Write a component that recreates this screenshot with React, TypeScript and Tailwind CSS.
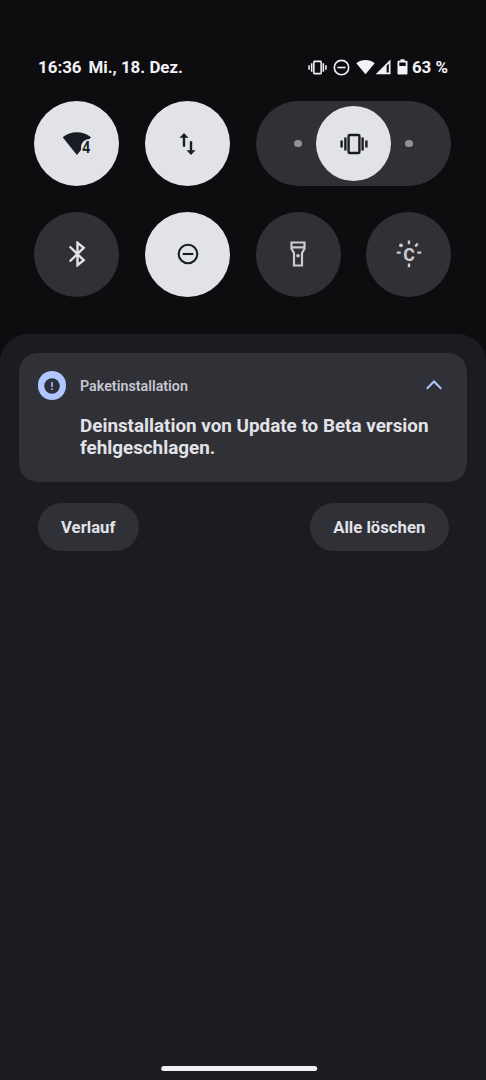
import type { ReactNode } from 'react';
import clsx from 'clsx';

function VibrateIcon({ className, strokeWidth = 2.4 }: { className?: string; strokeWidth?: number }) {
    return (
        <svg viewBox="0 0 28 22" className={className} fill="none" stroke="currentColor" strokeWidth={strokeWidth}>
            <rect x="8.6" y="2" width="10.8" height="18" rx="1" />
            <path d="M5.4 4.6v12.8M1.6 7.6v6.8M22.6 4.6v12.8M26.4 7.6v6.8" />
        </svg>
    );
}

function DndIcon({ className }: { className?: string }) {
    return (
        <svg viewBox="0 0 22 22" className={className} fill="none" stroke="currentColor" strokeWidth="2.1">
            <circle cx="11" cy="11" r="9.3" />
            <path d="M5.7 11h10.6" />
        </svg>
    );
}

function StatusBar() {
    return (
        <div className="flex h-5 items-center pl-[38px] pr-[38px] text-[16.9px] font-bold leading-5 text-[#f3f1f8]">
            <span className="w-[50.4px]">16:36</span>
            <span>Mi., 18. Dez.</span>
            <div className="ml-auto flex items-center">
                <VibrateIcon className="mr-1.5 h-[15px] w-[19px]" strokeWidth={2.3} />
                <DndIcon className="mr-1.5 size-[17px]" />
                <svg width="19" height="16" viewBox="0 0 19 16" fill="currentColor">
                    <path d="M.3 4.2C5.6-.2 13.4-.2 18.7 4.2L9.5 15.2z" />
                </svg>
                <svg width="16" height="16" viewBox="0 0 16 16" className="mr-[6.5px]" fill="currentColor">
                    <path d="M15.5.4v14.8H.7zM13.8 4.4l-2.2 2.4v6.8h2.2z" fillRule="evenodd" />
                </svg>
                <svg width="11" height="16" viewBox="0 0 11 16" className="mr-[3.5px]" fill="currentColor">
                    <path d="M3.5.2h4v1.6h2a1 1 0 0 1 1 1v11.7a1 1 0 0 1-1 1h-8a1 1 0 0 1-1-1V2.8a1 1 0 0 1 1-1h2zM2.3 3.5v3.6h6.4V3.5z" fillRule="evenodd" />
                </svg>
                <span>63 %</span>
            </div>
        </div>
    );
}

function Tile({ active = false, children }: { active?: boolean; children: ReactNode }) {
    return (
        <button
            className={clsx(
                'flex size-[85px] items-center justify-center rounded-full',
                active ? 'bg-[#e2e2e9] text-[#191c22]' : 'bg-[#303136] text-[#cbccd3]'
            )}
        >
            {children}
        </button>
    );
}

function RingerSlider() {
    return (
        <div className="col-span-2 flex h-[85px] items-center justify-between rounded-full bg-[#303136] px-[38.6px]">
            <span className="size-[7.5px] rounded-full bg-[#919197]" />
            <button className="flex size-[75px] items-center justify-center rounded-full bg-[#e2e2e9] text-[#191c22]">
                <VibrateIcon className="h-[22px] w-7" />
            </button>
            <span className="size-[7.5px] rounded-full bg-[#919197]" />
        </div>
    );
}

function QuickSettings() {
    return (
        <div className="grid grid-cols-[repeat(4,85px)] gap-x-[25.7px] gap-y-[25.6px] pl-[34.4px]">
            {/* Wifi 4 */}
            <Tile active>
                <svg width="30" height="24" viewBox="0 0 30 24" fill="currentColor" className="overflow-visible">
                    <path d="M.7 5.2C9-1.3 20.7-1.3 29 5.2l-1.5 1.8c-5 0-8.5 3.6-8.5 9v2L14.9 23z" />
                    <text x="20" y="20.5" fontSize="16" fontWeight="600" textLength="8.4" lengthAdjust="spacingAndGlyphs">4</text>
                </svg>
            </Tile>
            {/* Mobile data */}
            <Tile active>
                <svg width="17" height="22" viewBox="0 0 17 22" fill="currentColor">
                    <path d="M5 0l4.5 4.7H6.2v9H3.8v-9H.5zM12 22l-4.5-4.7h3.3v-9h2.4v9h3.3z" />
                </svg>
            </Tile>
            <RingerSlider />
            {/* Bluetooth */}
            <Tile>
                <svg width="18" height="26" viewBox="0 0 18 26" fill="none" stroke="currentColor" strokeWidth="2.4" className="text-[#e2e2e9]">
                    <path d="M1.7 5.5l14 13.7-6.2 5V1.8l6.2 5-14 13.7" />
                </svg>
            </Tile>
            <Tile active>
                <DndIcon className="size-[22px]" />
            </Tile>
            {/* Flashlight */}
            <Tile>
                <svg width="16" height="26" viewBox="0 0 16 26" fill="none" stroke="currentColor" strokeWidth="2.2">
                    <path d="M1.5 1.5h13v6.3l-2.5 4.2v12.5H4V12L1.5 7.8zM1.5 6.4h13" />
                    <circle cx="8" cy="14.7" r="1.8" fill="currentColor" stroke="none" />
                </svg>
            </Tile>
            {/* Caffeine */}
            <Tile>
                <svg width="26" height="28" viewBox="0 0 26 28" fill="none" stroke="currentColor" strokeWidth="2.4" className="overflow-visible">
                    <path d="M13 .5v3.7M13 23.5v3.7M.8 12.6h3.900M21.300 12.600h3.900M19.200 6.300l2.600-2.600" />
                    <circle cx="5" cy="5.3" r="1.9" fill="currentColor" stroke="none" />
                    <text x="7.2" y="21" fontSize="19" fontWeight="700" fill="currentColor" stroke="none" textLength="11.6" lengthAdjust="spacingAndGlyphs">C</text>
                </svg>
            </Tile>
        </div>
    );
}

function NotificationCard() {
    return (
        <div className="flex h-[129px] rounded-[19px] bg-[#303136] pl-[18.5px] pt-[18.5px]">
            <div className="flex size-[28.5px] items-center justify-center rounded-full bg-[#afc6ff]">
                <svg width="16" height="16" viewBox="0 0 16 16">
                    <circle cx="8" cy="8" r="7.8" fill="#2b2f3a" />
                    <path d="M8 4v5M8 10.3v1.7" stroke="#afc6ff" strokeWidth="1.5" />
                </svg>
            </div>
            <div className="ml-[14px] flex-1">
                <div className="flex h-[29px] items-center justify-between pr-[25px]">
                    <span className="pt-[2px] text-[14.3px] font-semibold text-[#c5c6d0]">Paketinstallation</span>
                    <svg width="16" height="10" viewBox="0 0 16 10" fill="none" stroke="#afc6ff" strokeWidth="2" className="mb-[2px]">
                        <path d="M.8 8.7L8 1.5l7.2 7.2" />
                    </svg>
                </div>
                <p className="mt-[14.5px] text-[18.83px] font-bold leading-[22px] text-[#e2e2e9]">
                    Deinstallation von Update to Beta version
                    <br />
                    fehlgeschlagen.
                </p>
            </div>
        </div>
    );
}

export default function App() {
    return (
        <div className="flex h-[1080px] w-[486px] flex-col overflow-hidden bg-[#0d0d0f] pt-[57px] font-['Roboto',sans-serif]">
            <StatusBar />
            <div className="mt-6">
                <QuickSettings />
            </div>
            <div className="mt-[37.4px] flex flex-1 flex-col rounded-t-[28px] bg-[#1b1c21] px-[19px] pt-[19px]">
                <NotificationCard />
                <div className="mt-[21px] flex justify-between px-[18.5px] text-[16.7px] font-bold text-[#e2e2e9]">
                    <button className="h-[48px] w-[101.5px] rounded-full bg-[#303136] pt-px">Verlauf</button>
                    <button className="h-[48px] w-[138.5px] rounded-full bg-[#303136] pt-px">Alle löschen</button>
                </div>
                <div className="mx-auto mb-[9px] mt-auto h-[5px] w-[156px] translate-x-[-3.8px] rounded-full bg-[#f1f0f3]" />
            </div>
        </div>
    );
}
